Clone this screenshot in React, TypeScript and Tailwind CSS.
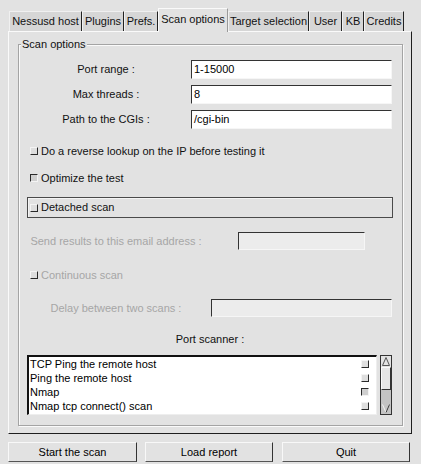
import React from "react";

const tabs = [
  { label: "Nessusd host", w: "w-[73px]" },
  { label: "Plugins", w: "w-[42px]" },
  { label: "Prefs.", w: "w-[34px]" },
  { label: "Scan options", w: "w-[70px]", active: true },
  { label: "Target selection", w: "w-[81px]" },
  { label: "User", w: "w-[33px]" },
  { label: "KB", w: "w-[22px]" },
  { label: "Credits", w: "w-[40px]" },
];

const scanners = [
  { name: "TCP Ping the remote host", on: false },
  { name: "Ping the remote host", on: false },
  { name: "Nmap", on: true },
  { name: "Nmap tcp connect() scan", on: false },
  { name: "FTP bounce scan", on: false },
];

function Check({ on = false }: { on?: boolean }) {
  return (
    <span
      className={
        on
          ? "inline-block w-[8px] h-[8px] shrink-0 border border-t-[#2a2a2a] border-l-[#2a2a2a] border-r-[#f4f4f4] border-b-[#f4f4f4] bg-[#cfcfcf]"
          : "inline-block w-[8px] h-[8px] shrink-0 border border-t-[#f4f4f4] border-l-[#f4f4f4] border-r-[#2a2a2a] border-b-[#2a2a2a] bg-[#dedede]"
      }
    />
  );
}

function Field({ value = "", disabled = false, w }: { value?: string; disabled?: boolean; w: string }) {
  return (
    <div
      className={`${w} ${
        disabled ? "h-[18px] bg-[#ececec]" : "h-[19px] bg-white"
      } border-t border-l border-t-[#333] border-l-[#333] border-r border-b border-r-[#f6f6f6] border-b-[#f6f6f6] pl-[2px] leading-[17px] text-black`}
    >
      {value}
    </div>
  );
}

function Button({ label, w }: { label: string; w: string }) {
  return (
    <button className={`${w} h-[20px] bg-[#e2e2e2] border-t border-l border-t-[#f8f8f8] border-l-[#f8f8f8] border-r border-b border-r-[#333] border-b-[#555] text-[11px] text-black`}>
      {label}
    </button>
  );
}

export default function App() {
  return (
    <div
      className="w-[421px] h-[464px] bg-[#e2e2e2] text-[11px] text-[#111] overflow-hidden"
      style={{ fontFamily: '"Liberation Sans", Arial, sans-serif' }}
    >
      {/* Tabs */}
      <div className="h-[31px] flex items-end pl-[9px]">
        {tabs.map((t) =>
          t.active ? (
            <div
              key={t.label}
              className={`${t.w} h-[24px] -mb-px relative z-10 bg-[#e2e2e2] border-t border-l border-t-[#fafafa] border-l-[#fafafa] border-r border-r-[#9a9a9a] flex items-center justify-center pb-[3px] whitespace-nowrap overflow-hidden`}
            >
              {t.label}
            </div>
          ) : (
            <div
              key={t.label}
              className={`${t.w} h-[20px] bg-[#d6d6d6] border-t border-l border-t-[#f0f0f0] border-l-[#f0f0f0] border-r border-r-[#222] flex items-center justify-center whitespace-nowrap overflow-hidden`}
            >
              {t.label}
            </div>
          )
        )}
      </div>

      {/* Panel */}
      <div className="ml-[8px] w-[404px] h-[403px] overflow-hidden border-t border-l border-t-[#fafafa] border-l-[#fafafa] border-r border-b border-r-[#1e1e1e] border-b-[#1e1e1e] pt-[12px] pl-[9px]">
        <div className="relative w-[385px] border border-[#a4a4a4] shadow-[inset_1px_1px_0_#fafafa,1px_1px_0_#fafafa] pt-[15px] pb-[10px] pl-[9px] pr-[10px]">
          <span className="absolute -top-[8px] left-[2px] px-[1px] bg-[#e2e2e2] leading-[14px]">Scan options</span>

          <div className="flex flex-col whitespace-nowrap">
            <div className="flex items-center">
              <div className="w-[156px] text-center">Port range :</div>
              <div className="ml-[7px]"><Field value="1-15000" w="w-[201px]" /></div>
            </div>
            <div className="flex items-center mt-[6px]">
              <div className="w-[156px] text-center">Max threads :</div>
              <div className="ml-[7px]"><Field value="8" w="w-[201px]" /></div>
            </div>
            <div className="flex items-center mt-[6px]">
              <div className="w-[156px] text-center">Path to the CGIs :</div>
              <div className="ml-[7px]"><Field value="/cgi-bin" w="w-[201px]" /></div>
            </div>

            <div className="flex items-center h-[16px] mt-[14px] pl-[2px] gap-[3px]">
              <Check />
              <span>Do a reverse lookup on the IP before testing it</span>
            </div>
            <div className="flex items-center h-[16px] mt-[11px] pl-[2px] gap-[3px]">
              <Check on />
              <span>Optimize the test</span>
            </div>

            <div className="flex items-center h-[21px] mt-[11px] -ml-[1px] w-[366px] border border-[#4a4a4a] shadow-[inset_1px_1px_0_#f4f4f4] pl-[2px] gap-[3px]">
              <Check />
              <span>Detached scan</span>
            </div>

            <div className="flex items-center mt-[14px] text-[#a6a6a6]">
              <div className="w-[176px] text-center">Send results to this email address :</div>
              <div className="ml-[34px]"><Field disabled w="w-[127px]" /></div>
            </div>

            <div className="flex items-center h-[16px] mt-[17px] pl-[2px] gap-[3px] text-[#a6a6a6]">
              <Check />
              <span>Continuous scan</span>
            </div>

            <div className="flex items-center mt-[16px] text-[#a6a6a6]">
              <div className="w-[176px] text-center">Delay between two scans :</div>
              <div className="ml-[7px]"><Field disabled w="w-[181px]" /></div>
            </div>

            <div className="h-[14px] mt-[15px] leading-[14px] text-center">Port scanner :</div>

            <div className="flex mt-[9px] -ml-[1px]">
              <div className="w-[350px] h-[60px] bg-white border-t-2 border-l-2 border-t-[#111] border-l-[#111] border-r border-b border-r-[#eee] border-b-[#eee] overflow-hidden">
                {scanners.map((s) => (
                  <div key={s.name} className="h-[14px] flex items-center justify-between pl-[1px] pr-[7px] leading-[14px] text-black">
                    <span>{s.name}</span>
                    <Check on={s.on} />
                  </div>
                ))}
              </div>

              {/* Scrollbar */}
              <div className="ml-[3px] w-[12px] h-[60px] border border-[#333] bg-[#c4c4c4] flex flex-col">
                <div className="h-[11px] bg-[#e2e2e2] flex items-center justify-center">
                  <svg width="8" height="9" viewBox="0 0 8 9">
                    <polyline points="0.5,8.5 4,0.5 7.5,8.5 0.5,8.5" fill="none" stroke="#555" strokeWidth="1" />
                  </svg>
                </div>
                <div className="h-[23px] bg-[#e6e6e6] border-t border-l border-t-[#fafafa] border-l-[#fafafa] border-r border-b border-r-[#333] border-b-[#333]" />
                <div className="flex-1" />
                <div className="h-[11px] bg-[#c4c4c4] flex items-center justify-center">
                  <svg width="8" height="9" viewBox="0 0 8 9">
                    <polyline points="0.5,0.5 4,8.5 7.5,0.5" fill="none" stroke="#f4f4f4" strokeWidth="1" />
                    <line x1="4" y1="8.5" x2="7.5" y2="0.5" stroke="#333" strokeWidth="1" />
                  </svg>
                </div>
              </div>
            </div>
          </div>
        </div>
      </div>

      {/* Bottom buttons */}
      <div className="flex mt-[8px] pl-[8px]">
        <Button label="Start the scan" w="w-[129px]" />
        <div className="ml-[8px]"><Button label="Load report" w="w-[128px]" /></div>
        <div className="ml-[9px]"><Button label="Quit" w="w-[128px]" /></div>
      </div>
    </div>
  );
}
